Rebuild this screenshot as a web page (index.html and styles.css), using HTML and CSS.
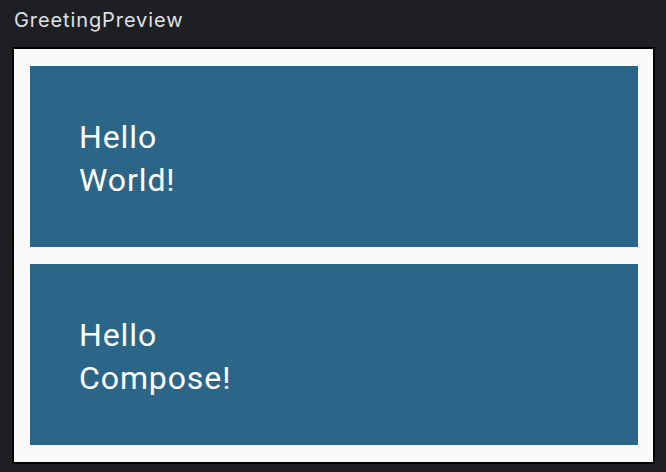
FILE: index.html
```html
<!DOCTYPE html>
<html>
<head>
<meta charset="utf-8">
<link rel="stylesheet" href="styles.css">
</head>
<body>
<div class="title">GreetingPreview</div>
<div class="frame">
  <div class="card"><div class="text">Hello<br>World!</div></div>
  <div class="card"><div class="text">Hello<br>Compose!</div></div>
</div>
</body>
</html>
```
FILE: styles.css
```css
html, body {
  margin: 0;
  padding: 0;
  background: #1e1f22;
  width: 666px;
  height: 472px;
  overflow: hidden;
}
.title {
  font-family: Inter, "Noto Sans", sans-serif;
  font-size: 20px;
  letter-spacing: 0.9px;
  color: #dfe1e5;
  height: 47px;
  box-sizing: border-box;
  padding: 8px 0 0 14px;
  line-height: 24px;
}
.frame {
  margin-left: 12px;
  width: 643px;
  height: 417px;
  box-sizing: border-box;
  border: 2px solid #000;
  background: #fafafa;
  padding: 17px 15px 17px 16px;
  display: flex;
  flex-direction: column;
  gap: 17px;
}
.card {
  background: #2b6587;
  height: 181px;
  box-sizing: border-box;
  padding: 50px 0 0 49px;
}
.text {
  font-family: Roboto, sans-serif;
  font-size: 32px;
  line-height: 43px;
  letter-spacing: 0.9px;
  color: #ffffff;
}
```
